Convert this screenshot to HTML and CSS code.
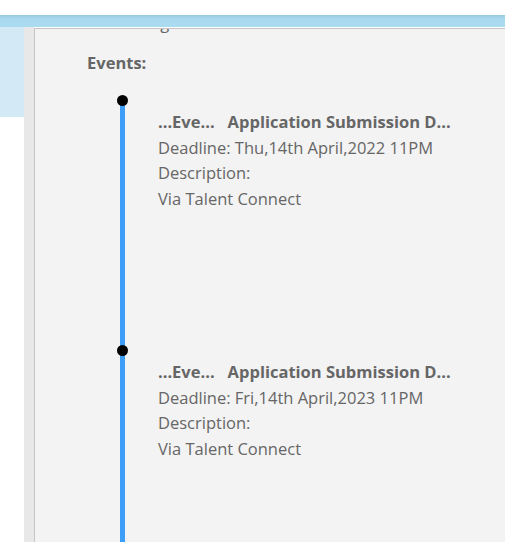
FILE: index.html
```html
<!DOCTYPE html>
<html>
<head>
<meta charset="utf-8">
<link rel="stylesheet" href="styles.css">
</head>
<body>
<div class="bluebar"></div>
<div class="main">
  <div class="side">
    <div class="side-blue"></div>
  </div>
  <div class="strip"></div>
  <div class="panel">
    <div class="clipped"><div class="clipped-text">Hiring</div></div>
    <div class="events-label">Events:</div>
    <div class="timeline">
      <div class="event">
        <span class="dot"></span>
        <div class="event-title"><span>...Eve...</span><span class="title-main">Application Submission D...</span></div>
        <div class="line">Deadline: Thu,14th April,2022 11PM</div>
        <div class="line">Description:</div>
        <div class="line">Via Talent Connect</div>
      </div>
      <div class="event">
        <span class="dot"></span>
        <div class="event-title"><span>...Eve...</span><span class="title-main">Application Submission D...</span></div>
        <div class="line">Deadline: Fri,14th April,2023 11PM</div>
        <div class="line">Description:</div>
        <div class="line">Via Talent Connect</div>
      </div>
    </div>
  </div>
</div>
</body>
</html>
```
FILE: styles.css
```css
html, body {
  margin: 0;
  padding: 0;
  background: #ffffff;
  height: 542px;
  overflow: hidden;
  font-family: "Open Sans", "Noto Sans", sans-serif;
  color: #666666;
}
.bluebar {
  margin-top: 15px;
  height: 12px;
  background: linear-gradient(#98c9df, #a8d8ee 30%, #acdcf1);
}
.main {
  display: flex;
  height: 515px;
}
.side {
  width: 24px;
  flex: none;
}
.side-blue {
  height: 90px;
  background: #d3e9f5;
}
.strip {
  width: 10px;
  flex: none;
  background: #e8e8e8;
}
.panel {
  flex: 1;
  background: #f3f3f3;
  border-left: 1px solid #c6c6c6;
  border-top: 1px solid #c6c6c6;
  margin-top: 1px;
  overflow: hidden;
}
.clipped {
  height: 4px;
  overflow: hidden;
  padding-left: 88px;
}
.clipped-text {
  font-size: 16.5px;
  line-height: 20px;
  margin-top: -16px;
}
.events-label {
  margin-top: 17px;
  padding-left: 52px;
  font-weight: 700;
  font-size: 16.5px;
  line-height: 25px;
}
.timeline {
  margin-top: 25px;
  margin-left: 85px;
  border-left: 5px solid #3d9ef8;
  padding-left: 33px;
}
.event {
  position: relative;
  height: 250px;
  padding-top: 9px;
  box-sizing: border-box;
  font-size: 16.5px;
  line-height: 25.5px;
}
.dot {
  position: absolute;
  left: -41px;
  top: -5px;
  width: 11px;
  height: 11px;
  border-radius: 50%;
  background: #000000;
}
.event-title {
  font-weight: 700;
  display: flex;
  gap: 13px;
  white-space: nowrap;
}
.line {
  white-space: nowrap;
}
```
